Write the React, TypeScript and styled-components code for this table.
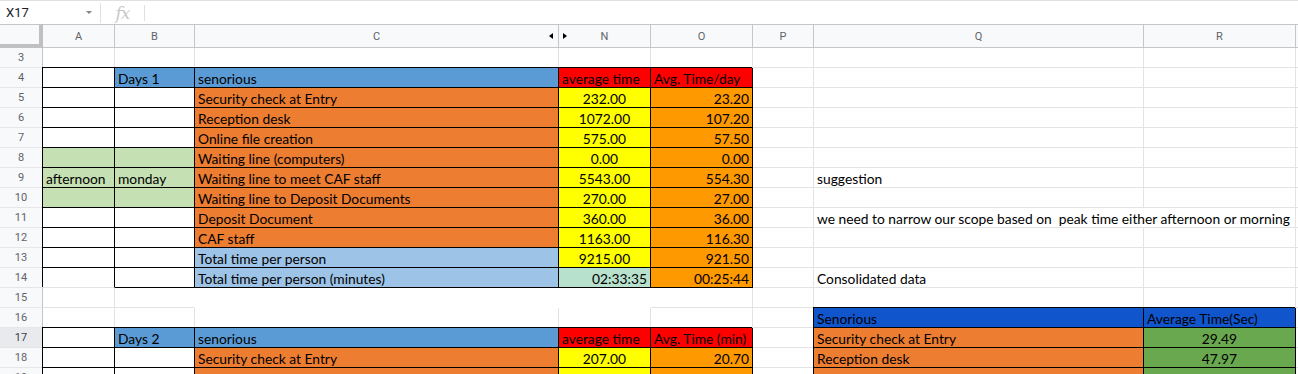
import React from "react";
import styled, { createGlobalStyle } from "styled-components";

const GlobalStyle = createGlobalStyle`
  html, body {
    margin: 0;
    padding: 0;
    background: #fff;
  }
  body {
    font-family: "Lato", "Liberation Sans", sans-serif;
    overflow: hidden;
  }
`;

const GRID_LINE = "#e2e3e3";
const HEADER_LINE = "#c4c7c5";

const FILL = {
  blue: "#5b9bd5",
  orange: "#ed7d31",
  red: "#ff0000",
  yellow: "#ffff00",
  amber: "#ff9900",
  sage: "#c5e0b3",
  sky: "#9dc3e6",
  mint: "#b7e1cd",
  royal: "#1155cc",
  green: "#6aa84f",
  white: "#ffffff",
};

type Align = "left" | "center" | "right";

type CellSpec = {
  text?: string;
  fill?: string;
  align?: Align;
  boxed?: boolean;
  noRight?: boolean;
  noBottom?: boolean;
  openBottom?: boolean;
};

const COLUMNS = [
  { id: "A", width: 72 },
  { id: "B", width: 80 },
  { id: "C", width: 364, hiddenAfter: true },
  { id: "N", width: 92 },
  { id: "O", width: 102 },
  { id: "P", width: 61 },
  { id: "Q", width: 330 },
  { id: "R", width: 152 },
];

const box = (fill: string, text?: string, align: Align = "left"): CellSpec => ({
  fill,
  text,
  align,
  boxed: true,
});

const empty = (): CellSpec => ({});

const note = (text: string, extra: Partial<CellSpec> = {}): CellSpec => ({ text, ...extra });

// one entry per visible sheet row: A, B, C, N, O, P, Q, R
const ROWS: { num: number; cells: CellSpec[] }[] = [
  { num: 3, cells: [empty(), empty(), empty(), empty(), empty(), empty(), empty(), empty()] },
  {
    num: 4,
    cells: [
      box(FILL.white),
      box(FILL.blue, "Days 1"),
      box(FILL.blue, "senorious"),
      box(FILL.red, "average time"),
      box(FILL.red, "Avg. Time/day"),
      empty(),
      empty(),
      empty(),
    ],
  },
  {
    num: 5,
    cells: [
      box(FILL.white),
      box(FILL.white),
      box(FILL.orange, "Security check at Entry"),
      box(FILL.yellow, "232.00", "center"),
      box(FILL.amber, "23.20", "right"),
      empty(),
      empty(),
      empty(),
    ],
  },
  {
    num: 6,
    cells: [
      box(FILL.white),
      box(FILL.white),
      box(FILL.orange, "Reception desk"),
      box(FILL.yellow, "1072.00", "center"),
      box(FILL.amber, "107.20", "right"),
      empty(),
      empty(),
      empty(),
    ],
  },
  {
    num: 7,
    cells: [
      box(FILL.white),
      box(FILL.white),
      box(FILL.orange, "Online file creation"),
      box(FILL.yellow, "575.00", "center"),
      box(FILL.amber, "57.50", "right"),
      empty(),
      empty(),
      empty(),
    ],
  },
  {
    num: 8,
    cells: [
      box(FILL.sage),
      box(FILL.sage),
      box(FILL.orange, "Waiting line (computers)"),
      box(FILL.yellow, "0.00", "center"),
      box(FILL.amber, "0.00", "right"),
      empty(),
      empty(),
      empty(),
    ],
  },
  {
    num: 9,
    cells: [
      box(FILL.sage, "afternoon"),
      box(FILL.sage, "monday"),
      box(FILL.orange, "Waiting line to meet CAF staff"),
      box(FILL.yellow, "5543.00", "center"),
      box(FILL.amber, "554.30", "right"),
      empty(),
      note("suggestion"),
      empty(),
    ],
  },
  {
    num: 10,
    cells: [
      box(FILL.sage),
      box(FILL.sage),
      box(FILL.orange, "Waiting line to Deposit Documents"),
      box(FILL.yellow, "270.00", "center"),
      box(FILL.amber, "27.00", "right"),
      empty(),
      empty(),
      empty(),
    ],
  },
  {
    num: 11,
    cells: [
      box(FILL.white),
      box(FILL.white),
      box(FILL.orange, "Deposit Document"),
      box(FILL.yellow, "360.00", "center"),
      box(FILL.amber, "36.00", "right"),
      empty(),
      note("we need to narrow our scope based on  peak time either afternoon or morning", {
        noRight: true,
      }),
      empty(),
    ],
  },
  {
    num: 12,
    cells: [
      box(FILL.white),
      box(FILL.white),
      box(FILL.orange, "CAF staff"),
      box(FILL.yellow, "1163.00", "center"),
      box(FILL.amber, "116.30", "right"),
      empty(),
      empty(),
      empty(),
    ],
  },
  {
    num: 13,
    cells: [
      box(FILL.white),
      box(FILL.white),
      box(FILL.sky, "Total time per person"),
      box(FILL.yellow, "9215.00", "center"),
      box(FILL.amber, "921.50", "right"),
      empty(),
      empty(),
      empty(),
    ],
  },
  {
    num: 14,
    cells: [
      { ...box(FILL.white), openBottom: true },
      box(FILL.white),
      box(FILL.sky, "Total time per person (minutes)"),
      box(FILL.mint, "02:33:35", "right"),
      box(FILL.amber, "00:25:44", "right"),
      empty(),
      note("Consolidated data"),
      empty(),
    ],
  },
  {
    num: 15,
    cells: [
      empty(),
      { noRight: true },
      { noRight: true, noBottom: true },
      { noRight: true, noBottom: true },
      empty(),
      empty(),
      empty(),
      empty(),
    ],
  },
  {
    num: 16,
    cells: [
      empty(),
      empty(),
      empty(),
      empty(),
      empty(),
      empty(),
      box(FILL.royal, "Senorious"),
      box(FILL.royal, "Average Time(Sec)"),
    ],
  },
  {
    num: 17,
    cells: [
      box(FILL.white),
      box(FILL.blue, "Days 2"),
      box(FILL.blue, "senorious"),
      box(FILL.red, "average time"),
      box(FILL.red, "Avg. Time (min)"),
      empty(),
      box(FILL.orange, "Security check at Entry"),
      box(FILL.green, "29.49", "center"),
    ],
  },
  {
    num: 18,
    cells: [
      box(FILL.white),
      box(FILL.white),
      box(FILL.orange, "Security check at Entry"),
      box(FILL.yellow, "207.00", "center"),
      box(FILL.amber, "20.70", "right"),
      empty(),
      box(FILL.orange, "Reception desk"),
      box(FILL.green, "47.97", "center"),
    ],
  },
  {
    num: 19,
    cells: [
      box(FILL.white),
      box(FILL.white),
      box(FILL.orange, "Reception desk"),
      box(FILL.yellow, "1180.00", "center"),
      box(FILL.amber, "118.00", "right"),
      empty(),
      box(FILL.orange, "Online file creation"),
      box(FILL.green, "5.75", "center"),
    ],
  },
];

const ACTIVE_ROW = 17;

/* formula bar */

const FormulaBar = styled.div`
  height: 24px;
  box-sizing: border-box;
  border-top: 1px solid #e0e0e0;
  display: flex;
  align-items: center;
  font-family: "Roboto", "Liberation Sans", sans-serif;
`;

const NameBox = styled.div`
  width: 100px;
  box-sizing: border-box;
  padding: 0 8px 0 6px;
  display: flex;
  align-items: center;
  justify-content: space-between;
  font-size: 13px;
  color: #202124;
`;

const Caret = styled.span`
  width: 0;
  height: 0;
  border-left: 3px solid transparent;
  border-right: 3px solid transparent;
  border-top: 3px solid #80868b;
`;

const Divider = styled.div<{ $short?: boolean }>`
  width: 1px;
  height: ${(p) => (p.$short ? 16 : 20)}px;
  background: #e0e0e0;
`;

const FxMark = styled.div`
  width: 43px;
  text-align: center;
  font-family: "DejaVu Serif", "Liberation Serif", serif;
  font-style: italic;
  font-size: 17px;
  color: #c8c8c8;
  letter-spacing: -1px;
`;

/* sheet grid */

const Sheet = styled.div`
  display: grid;
  grid-template-columns: 43px ${COLUMNS.map((c) => `${c.width}px`).join(" ")} 1fr;
  grid-template-rows: 24px;
  grid-auto-rows: 20px;
`;

const Corner = styled.div`
  box-sizing: border-box;
  background: #f8f9fa;
  border-top: 1px solid ${HEADER_LINE};
  border-right: 4px solid #c0c0c0;
  border-bottom: 4px solid #c0c0c0;
`;

const ColumnHeader = styled.div`
  position: relative;
  box-sizing: border-box;
  background: #f8f9fa;
  border-top: 1px solid ${HEADER_LINE};
  border-right: 1px solid ${HEADER_LINE};
  border-bottom: 1px solid ${HEADER_LINE};
  display: flex;
  align-items: center;
  justify-content: center;
  font-family: "Roboto", "Liberation Sans", sans-serif;
  font-size: 11px;
  color: #5f6368;
`;

const HiddenMarker = styled.span<{ $dir: "left" | "right" }>`
  position: absolute;
  z-index: 1;
  top: 8px;
  ${(p) => (p.$dir === "left" ? "right: 5px;" : "right: -9px;")}
  width: 0;
  height: 0;
  border-top: 3.5px solid transparent;
  border-bottom: 3.5px solid transparent;
  ${(p) => (p.$dir === "left" ? "border-right: 4px solid #000;" : "border-left: 4px solid #000;")}
`;

const RowHeader = styled.div<{ $active?: boolean }>`
  box-sizing: border-box;
  background: ${(p) => (p.$active ? "#e8eaed" : "#f8f9fa")};
  border-right: 1px solid ${HEADER_LINE};
  border-bottom: 1px solid #e6e6e6;
  display: flex;
  align-items: center;
  justify-content: center;
  font-family: "Roboto", "Liberation Sans", sans-serif;
  font-size: 11px;
  color: ${(p) => (p.$active ? "#3c4043" : "#5f6368")};
`;

const justify = { left: "flex-start", center: "center", right: "flex-end" };

const Cell = styled.div<{
  $fill?: string;
  $align: Align;
  $boxed?: boolean;
  $noRight?: boolean;
  $noBottom?: boolean;
  $openBottom?: boolean;
}>`
  box-sizing: border-box;
  display: flex;
  align-items: flex-end;
  justify-content: ${(p) => justify[p.$align]};
  padding: 0 3px;
  background: ${(p) => p.$fill ?? "transparent"};
  border-right: 1px solid
    ${(p) => (p.$boxed ? "#000" : p.$noRight ? "transparent" : GRID_LINE)};
  border-bottom: 1px solid
    ${(p) =>
      p.$boxed && !p.$openBottom ? "#000" : p.$noBottom ? "transparent" : GRID_LINE};
  box-shadow: ${(p) => (p.$boxed ? "-1px -1px 0 #000" : "none")};
  white-space: pre;
  font-size: 13.8px;
  line-height: 17px;
  color: #000;
`;

const Filler = styled.div`
  border-bottom: 1px solid ${GRID_LINE};
`;

const HeaderFiller = styled(ColumnHeader)`
  border-right: none;
`;

export default function App() {
  return (
    <>
      <GlobalStyle />
      <FormulaBar>
        <NameBox>
          X17
          <Caret />
        </NameBox>
        <Divider />
        <FxMark>fx</FxMark>
        <Divider $short />
      </FormulaBar>
      <Sheet>
        <Corner />
        {COLUMNS.map((col) => (
          <ColumnHeader key={col.id}>
            {col.id}
            {col.hiddenAfter && (
              <>
                <HiddenMarker $dir="left" />
                <HiddenMarker $dir="right" />
              </>
            )}
          </ColumnHeader>
        ))}
        <HeaderFiller />
        {ROWS.map((row) => (
          <React.Fragment key={row.num}>
            <RowHeader $active={row.num === ACTIVE_ROW}>{row.num}</RowHeader>
            {row.cells.map((cell, i) => (
              <Cell
                key={i}
                $fill={cell.fill}
                $align={cell.align ?? "left"}
                $boxed={cell.boxed}
                $noRight={cell.noRight}
                $noBottom={cell.noBottom}
                $openBottom={cell.openBottom}
              >
                {cell.text}
              </Cell>
            ))}
            <Filler />
          </React.Fragment>
        ))}
      </Sheet>
    </>
  );
}
